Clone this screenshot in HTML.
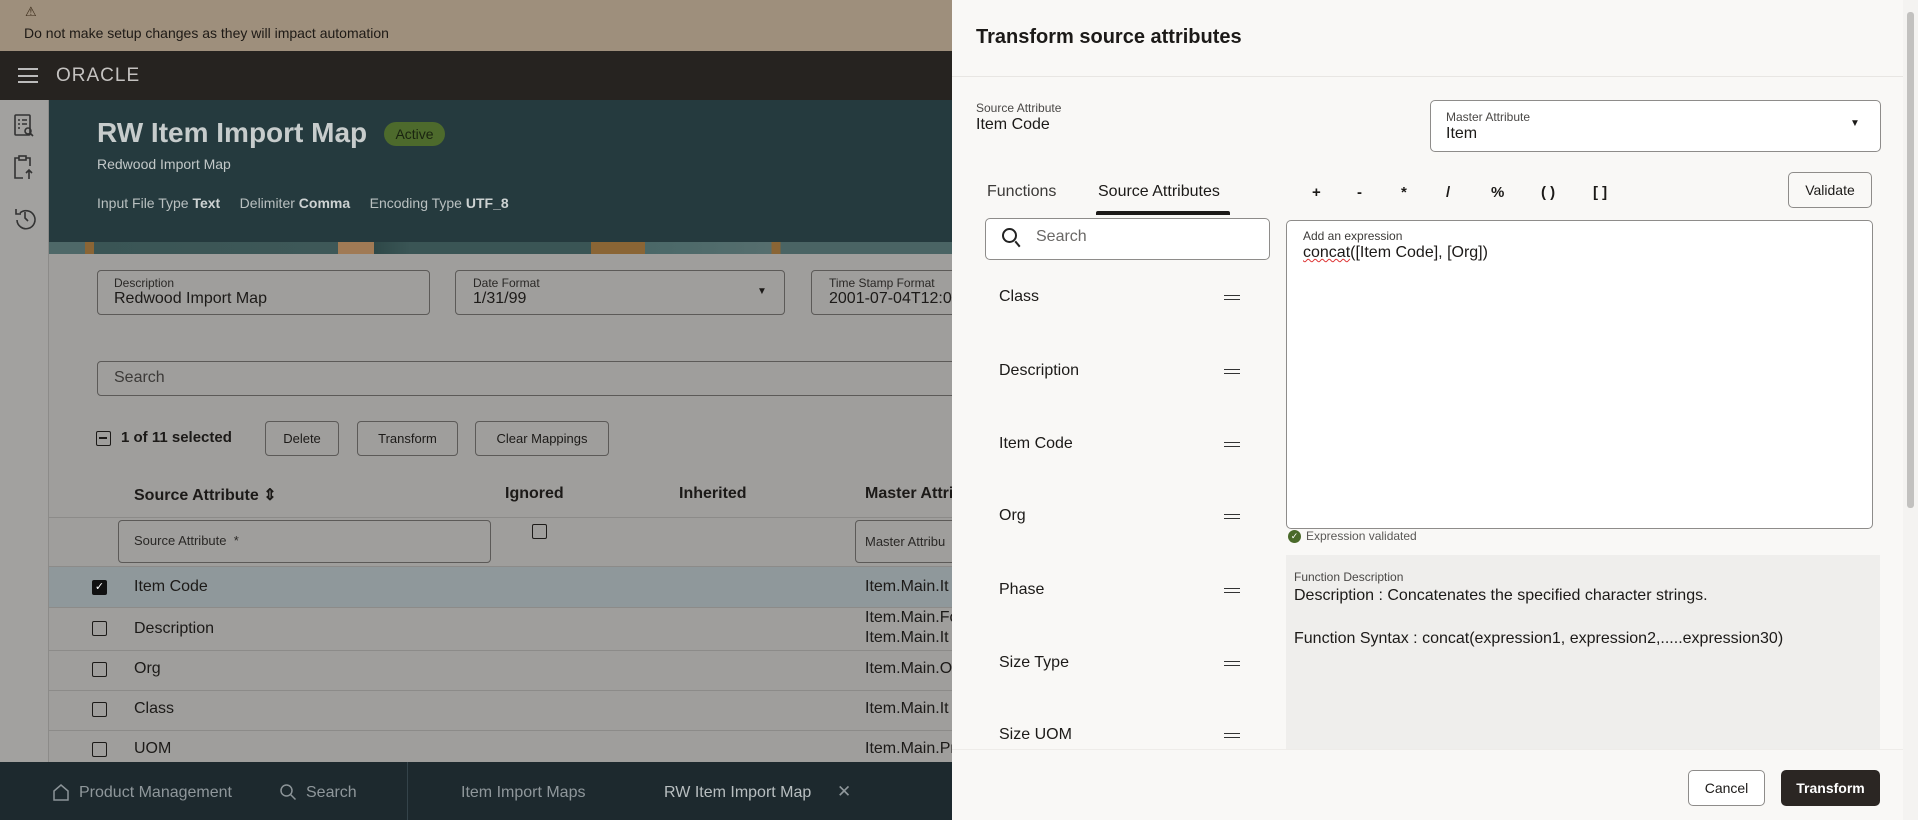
<!DOCTYPE html>
<html><head><meta charset="utf-8"><style>
*{box-sizing:border-box;margin:0;padding:0}
body{width:1918px;height:820px;overflow:hidden;position:relative;font-family:"Liberation Sans",sans-serif;background:#9f9e9c;color:#1c1a18}
.a{position:absolute;white-space:nowrap}
.box{position:absolute;border:1px solid #5c5a58;border-radius:4px}
.btn{position:absolute;border:1px solid #5c5a58;border-radius:4px;font-size:13px;display:flex;align-items:center;justify-content:center;color:#1c1a18}
.cb{position:absolute;width:15px;height:15px;border:1.5px solid #1c1a18;border-radius:2px}
.rb{position:absolute;border:1px solid #8e8c8a;border-radius:5px;background:#fff}
.eq{position:absolute;width:16px;height:5px;border-top:1.6px solid #333;border-bottom:1.6px solid #333}
</style></head><body>
<!-- banner -->
<div class="a" style="left:0;top:0;width:952px;height:51px;background:#9e8f7c"></div>
<div class="a" style="left:25px;top:4px;font-size:13px;color:#3a2a18">⚠</div>
<div class="a" style="left:24px;top:25px;font-size:14px;color:#1e1a16">Do not make setup changes as they will impact automation</div>
<!-- nav -->
<div class="a" style="left:0;top:51px;width:952px;height:49px;background:#262320"></div>
<div class="a" style="left:18px;top:68px;width:20px;height:15px;border-top:2px solid #bbb;border-bottom:2px solid #bbb"></div>
<div class="a" style="left:18px;top:74.5px;width:20px;height:2px;background:#bbb"></div>
<div class="a" style="left:56px;top:65px;font-size:19px;letter-spacing:1px;color:#c4c2c0">ORACLE</div>
<!-- sidebar -->
<div class="a" style="left:0;top:100px;width:49px;height:662px;background:#a2a19f;border-right:1px solid #8c8b89"></div>
<svg class="a" style="left:12px;top:112px" width="26" height="130" viewBox="0 0 26 130" fill="none" stroke="#333" stroke-width="1.6">
<rect x="3" y="3" width="15" height="20" rx="1"/><path d="M6 8h2M10 8h5M6 12h2M10 12h5M6 16h2"/><circle cx="16" cy="19" r="3"/><path d="M18 21l3 3"/>
<path d="M3 52v-6h4M14 46h4v8M3 52v14h8"/><rect x="7" y="44" width="7" height="4"/><path d="M17 67v-9M14 61l3-3 3 3"/>
<path d="M5 108a9 9 0 1 0 3-7"/><path d="M4 97v5h5"/><path d="M13 100v6l3 3"/>
</svg>
<!-- header -->
<div class="a" style="left:49px;top:100px;width:903px;height:142px;background:#253a3e"></div>
<div class="a" style="left:49px;top:242px;width:903px;height:12px;background:linear-gradient(90deg,#4e6868 0,#4e6868 4%,#8a6535 4%,#8a6535 5%,#3a5555 5%,#3e5858 32%,#a07a55 32%,#a07a55 36%,#2e4848 36%,#3a5555 40%,#3a5555 60%,#8a6535 60%,#8a6535 66%,#4a6868 66%,#566e6e 80%,#8a6535 80%,#8a6535 81%,#4a6464 81%)"></div>
<div class="a" style="left:97px;top:117px;font-size:28px;font-weight:bold;color:#c7cccc">RW Item Import Map</div>
<div class="a" style="left:384px;top:122px;width:61px;height:24px;border-radius:12px;background:#4d6a2c;color:#1a2410;font-size:14px;text-align:center;line-height:24px">Active</div>
<div class="a" style="left:97px;top:156px;font-size:14px;color:#c2c8c8">Redwood Import Map</div>
<div class="a" style="left:97px;top:195px;font-size:14px;color:#b9c0c0">Input File Type <b style="color:#cdd2d2">Text</b> &nbsp;&nbsp;&nbsp;&nbsp;Delimiter <b style="color:#cdd2d2">Comma</b> &nbsp;&nbsp;&nbsp;&nbsp;Encoding Type <b style="color:#cdd2d2">UTF_8</b></div>
<!-- fields -->
<div class="box" style="left:97px;top:270px;width:333px;height:45px"></div>
<div class="a" style="left:114px;top:276px;font-size:12px;color:#2a2826">Description</div>
<div class="a" style="left:114px;top:290px;font-size:16px">Redwood Import Map</div>
<div class="box" style="left:455px;top:270px;width:330px;height:45px"></div>
<div class="a" style="left:473px;top:276px;font-size:12px;color:#2a2826">Date Format</div>
<div class="a" style="left:473px;top:290px;font-size:16px">1/31/99</div>
<div class="a" style="left:757px;top:286px;font-size:10px">▼</div>
<div class="box" style="left:811px;top:270px;width:160px;height:45px"></div>
<div class="a" style="left:829px;top:276px;font-size:12px;color:#2a2826">Time Stamp Format</div>
<div class="a" style="left:829px;top:290px;font-size:16px">2001-07-04T12:0</div>
<div class="box" style="left:97px;top:361px;width:900px;height:35px"></div>
<div class="a" style="left:114px;top:369px;font-size:16px;color:#3c3a38">Search</div>
<!-- toolbar -->
<div class="cb" style="left:96px;top:431px"></div><div class="a" style="left:99px;top:437px;width:8px;height:1.5px;background:#1c1a18"></div>
<div class="a" style="left:121px;top:429px;font-size:15px;font-weight:bold">1 of 11 selected</div>
<div class="btn" style="left:265px;top:421px;width:74px;height:35px">Delete</div>
<div class="btn" style="left:357px;top:421px;width:101px;height:35px">Transform</div>
<div class="btn" style="left:475px;top:421px;width:134px;height:35px">Clear Mappings</div>
<!-- table -->
<div class="a" style="left:134px;top:485px;font-size:16px;font-weight:bold">Source Attribute ⇕</div>
<div class="a" style="left:505px;top:485px;font-size:16px;font-weight:bold">Ignored</div>
<div class="a" style="left:679px;top:485px;font-size:16px;font-weight:bold">Inherited</div>
<div class="a" style="left:865px;top:485px;font-size:16px;font-weight:bold">Master Attri</div>
<div class="a" style="left:49px;top:517px;width:903px;height:1px;background:#8c8b89"></div>
<div class="box" style="left:118px;top:520px;width:373px;height:43px"></div>
<div class="a" style="left:134px;top:533px;font-size:13px;color:#2a2826">Source Attribute &nbsp;*</div>
<div class="cb" style="left:532px;top:524px"></div>
<div class="box" style="left:855px;top:520px;width:120px;height:43px"></div>
<div class="a" style="left:865px;top:534px;font-size:13px;color:#2a2826">Master Attribu</div>
<div class="a" style="left:49px;top:566px;width:903px;height:1px;background:#8c8b89"></div>
<div class="a" style="left:49px;top:567px;width:903px;height:40px;background:#8f989b"></div>
<div class="a" style="left:92px;top:580px;width:15px;height:15px;background:#111;border-radius:2px;color:#fff;font-size:11px;text-align:center;line-height:15px">✓</div>
<div class="a" style="left:134px;top:578px;font-size:16px">Item Code</div><div class="a" style="left:865px;top:578px;font-size:16px">Item.Main.It</div>
<div class="a" style="left:49px;top:607px;width:903px;height:1px;background:#8c8b89"></div>
<div class="cb" style="left:92px;top:621px"></div>
<div class="a" style="left:134px;top:620px;font-size:16px">Description</div><div class="a" style="left:865px;top:609px;font-size:16px">Item.Main.Fo</div><div class="a" style="left:865px;top:629px;font-size:16px">Item.Main.It</div>
<div class="a" style="left:49px;top:650px;width:903px;height:1px;background:#8c8b89"></div>
<div class="cb" style="left:92px;top:662px"></div>
<div class="a" style="left:134px;top:660px;font-size:16px">Org</div><div class="a" style="left:865px;top:660px;font-size:16px">Item.Main.O</div>
<div class="a" style="left:49px;top:690px;width:903px;height:1px;background:#8c8b89"></div>
<div class="cb" style="left:92px;top:702px"></div>
<div class="a" style="left:134px;top:700px;font-size:16px">Class</div><div class="a" style="left:865px;top:700px;font-size:16px">Item.Main.It</div>
<div class="a" style="left:49px;top:730px;width:903px;height:1px;background:#8c8b89"></div>
<div class="cb" style="left:92px;top:742px"></div>
<div class="a" style="left:134px;top:740px;font-size:16px">UOM</div><div class="a" style="left:865px;top:740px;font-size:16px">Item.Main.Pr</div>
<!-- bottom bar -->
<div class="a" style="left:0;top:762px;width:952px;height:58px;background:#1d292e"></div>
<div class="a" style="left:407px;top:762px;width:1px;height:58px;background:#34434a"></div>
<svg class="a" style="left:52px;top:783px" width="18" height="18" viewBox="0 0 18 18" fill="none" stroke="#8c9498" stroke-width="1.5"><path d="M2 17V8l7-6 7 6v9z"/></svg>
<div class="a" style="left:79px;top:784px;font-size:16px;color:#8f979b">Product Management</div>
<svg class="a" style="left:279px;top:783px" width="18" height="18" viewBox="0 0 18 18" fill="none" stroke="#8c9498" stroke-width="1.5"><circle cx="7.5" cy="7.5" r="5.5"/><path d="M11.5 11.5l5 5"/></svg>
<div class="a" style="left:306px;top:784px;font-size:16px;color:#8f979b">Search</div>
<div class="a" style="left:461px;top:784px;font-size:16px;color:#8f979b">Item Import Maps</div>
<div class="a" style="left:664px;top:784px;font-size:16px;color:#b8bec0">RW Item Import Map</div>
<div class="a" style="left:837px;top:782px;font-size:17px;color:#8f979b">✕</div>
<!-- right panel -->
<div class="a" style="left:952px;top:0;width:966px;height:820px;background:#f9f8f6"></div>
<div class="a" style="left:1903px;top:0;width:15px;height:820px;background:#f4f3f1"></div>
<div class="a" style="left:1907px;top:12px;width:7px;height:496px;background:#c2c1bf;border-radius:3px"></div>
<div class="a" style="left:976px;top:26px;font-size:20px;font-weight:bold;color:#1c1a18">Transform source attributes</div>
<div class="a" style="left:952px;top:76px;width:951px;height:1px;background:#e8e6e3"></div>
<div class="a" style="left:976px;top:101px;font-size:12px;color:#4a4846">Source Attribute</div>
<div class="a" style="left:976px;top:116px;font-size:16px">Item Code</div>
<div class="rb" style="left:1430px;top:100px;width:451px;height:52px"></div>
<div class="a" style="left:1446px;top:110px;font-size:12px;color:#4a4846">Master Attribute</div>
<div class="a" style="left:1446px;top:125px;font-size:16px">Item</div>
<div class="a" style="left:1850px;top:118px;font-size:10px">▼</div>
<div class="a" style="left:987px;top:183px;font-size:16px;color:#3c3a38">Functions</div>
<div class="a" style="left:1098px;top:183px;font-size:16px;color:#1c1a18">Source Attributes</div>
<div class="a" style="left:1096px;top:211px;width:134px;height:4px;background:#1c1a18;border-radius:2px 2px 0 0"></div>
<div class="a" style="left:1312px;top:184px;font-size:15px;font-weight:bold">+</div>
<div class="a" style="left:1357px;top:184px;font-size:15px;font-weight:bold">-</div>
<div class="a" style="left:1401px;top:184px;font-size:15px;font-weight:bold">*</div>
<div class="a" style="left:1446px;top:184px;font-size:15px;font-weight:bold">/</div>
<div class="a" style="left:1491px;top:184px;font-size:15px;font-weight:bold">%</div>
<div class="a" style="left:1541px;top:184px;font-size:15px;font-weight:bold">( )</div>
<div class="a" style="left:1593px;top:184px;font-size:15px;font-weight:bold">[ ]</div>
<div class="rb" style="left:1788px;top:172px;width:84px;height:36px;display:flex;align-items:center;justify-content:center;font-size:14px;background:#f9f8f6">Validate</div>
<div class="rb" style="left:985px;top:218px;width:285px;height:42px"></div>
<div class="a" style="left:1002px;top:228px;width:15px;height:15px;border:2px solid #222;border-radius:50%"></div>
<div class="a" style="left:1014px;top:243px;width:7px;height:2px;background:#222;transform:rotate(50deg)"></div>
<div class="a" style="left:1036px;top:228px;font-size:16px;color:#6a6866">Search</div>
<div class="a" style="left:999px;top:288px;font-size:16px">Class</div><div class="eq" style="left:1224px;top:295px"></div>
<div class="a" style="left:999px;top:362px;font-size:16px">Description</div><div class="eq" style="left:1224px;top:369px"></div>
<div class="a" style="left:999px;top:435px;font-size:16px">Item Code</div><div class="eq" style="left:1224px;top:442px"></div>
<div class="a" style="left:999px;top:507px;font-size:16px">Org</div><div class="eq" style="left:1224px;top:514px"></div>
<div class="a" style="left:999px;top:581px;font-size:16px">Phase</div><div class="eq" style="left:1224px;top:588px"></div>
<div class="a" style="left:999px;top:654px;font-size:16px">Size Type</div><div class="eq" style="left:1224px;top:661px"></div>
<div class="a" style="left:999px;top:726px;font-size:16px">Size UOM</div><div class="eq" style="left:1224px;top:733px"></div>
<div class="rb" style="left:1286px;top:220px;width:587px;height:309px"></div>
<div class="a" style="left:1303px;top:229px;font-size:12px;color:#3c3a38">Add an expression</div>
<div class="a" style="left:1303px;top:244px;font-size:16px"><span style="text-decoration:underline wavy #d33;text-decoration-thickness:1px">concat</span>([Item Code], [Org])</div>
<div class="a" style="left:1288px;top:530px;width:13px;height:13px;border-radius:50%;background:#4a6a2a;color:#fff;font-size:9px;text-align:center;line-height:13px">✓</div>
<div class="a" style="left:1306px;top:529px;font-size:12px;color:#5a5856">Expression validated</div>
<div class="a" style="left:1286px;top:555px;width:594px;height:194px;background:#efeeec"></div>
<div class="a" style="left:1294px;top:570px;font-size:12px;color:#4a4846">Function Description</div>
<div class="a" style="left:1294px;top:587px;font-size:16px">Description : Concatenates the specified character strings.</div>
<div class="a" style="left:1294px;top:630px;font-size:16px">Function Syntax : concat(expression1, expression2,.....expression30)</div>
<div class="a" style="left:952px;top:749px;width:951px;height:1px;background:#eeece9"></div>
<div class="rb" style="left:1688px;top:770px;width:77px;height:36px;display:flex;align-items:center;justify-content:center;font-size:14px;background:#fff">Cancel</div>
<div class="a" style="left:1781px;top:770px;width:99px;height:36px;border-radius:5px;background:#2b2623;color:#fff;font-size:14px;font-weight:bold;display:flex;align-items:center;justify-content:center">Transform</div>
</body></html>
